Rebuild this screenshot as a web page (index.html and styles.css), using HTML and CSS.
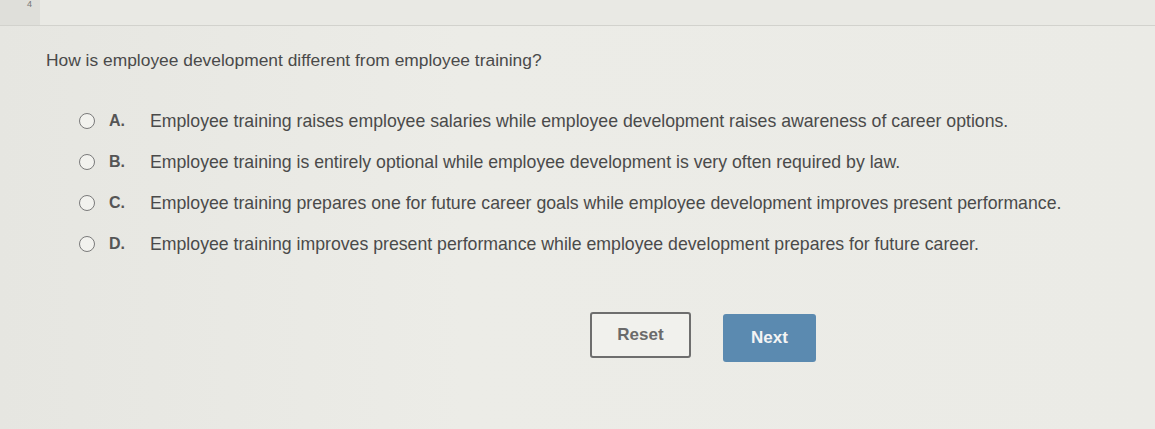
FILE: index.html
```html
<!DOCTYPE html>
<html>
<head>
<meta charset="utf-8">
<link rel="stylesheet" href="styles.css">
</head>
<body>
<div class="topbar">
  <div class="num">4</div>
  <div class="rest"></div>
</div>
<div class="content">
  <p class="question">How is employee development different from employee training?</p>
  <div class="options">
    <div class="opt"><span class="radio"></span><span class="letter">A.</span><span class="text">Employee training raises employee salaries while employee development raises awareness of career options.</span></div>
    <div class="opt"><span class="radio"></span><span class="letter">B.</span><span class="text">Employee training is entirely optional while employee development is very often required by law.</span></div>
    <div class="opt"><span class="radio"></span><span class="letter">C.</span><span class="text">Employee training prepares one for future career goals while employee development improves present performance.</span></div>
    <div class="opt"><span class="radio"></span><span class="letter">D.</span><span class="text">Employee training improves present performance while employee development prepares for future career.</span></div>
  </div>
  <div class="buttons">
    <button class="btn reset">Reset</button>
    <button class="btn next">Next</button>
  </div>
</div>
</body>
</html>
```
FILE: styles.css
```css
html, body {
  margin: 0;
  padding: 0;
}
body {
  width: 1155px;
  height: 429px;
  overflow: hidden;
  background: linear-gradient(90deg, #e6e6e1 0%, #ececE7 40%, #ebebe6 100%);
  font-family: "Liberation Sans", Arial, sans-serif;
  color: #4a4a4a;
}
.topbar {
  display: flex;
  height: 25px;
  border-bottom: 1px solid #d2d2cd;
}
.num {
  width: 40px;
  background: #dfdfda;
  font-size: 9px;
  color: #777;
  padding-left: 27px;
  box-sizing: border-box;
  line-height: 8px;
}
.rest {
  flex: 1;
  background: #e9e9e4;
}
.content {
  padding: 0 0 0 46px;
}
.question {
  margin: 24px 0 0 0;
  font-size: 17.4px;
  line-height: 20px;
}
.options {
  margin-top: 41px;
  margin-left: 33px;
  display: flex;
  flex-direction: column;
  gap: 21px;
}
.opt {
  display: flex;
  align-items: center;
  height: 20px;
  font-size: 17.7px;
}
.radio {
  width: 16px;
  height: 16px;
  border: 1.5px solid #7a7a7a;
  border-radius: 50%;
  box-sizing: border-box;
  background: #f2f2ee;
  flex: none;
}
.letter {
  width: 41px;
  margin-left: 14px;
  font-weight: bold;
  font-size: 16px;
  color: #555;
}
.text {
  white-space: nowrap;
}
.buttons {
  display: flex;
  gap: 32px;
  margin-left: 544px;
  margin-top: 58px;
  align-items: flex-start;
}
.btn {
  font-family: "Liberation Sans", Arial, sans-serif;
  font-size: 17px;
  font-weight: bold;
  border-radius: 3px;
}
.reset {
  width: 101px;
  height: 46px;
  background: #f1f1ed;
  border: 2px solid #6e6e6e;
  color: #6a6a6a;
}
.next {
  margin-top: 2px;
  width: 93px;
  height: 48px;
  background: #5b8ab0;
  border: none;
  color: #f4f4f4;
}
```
